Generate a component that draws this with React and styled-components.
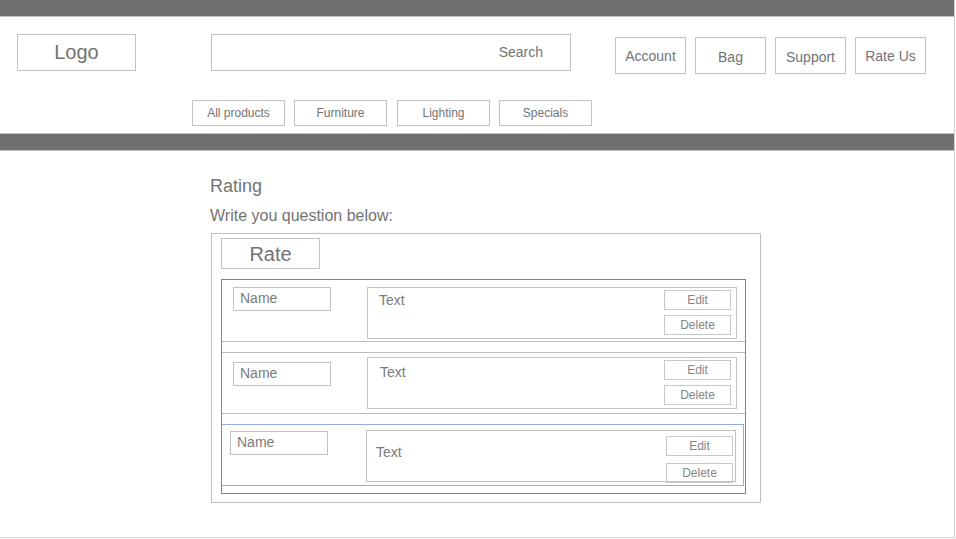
import React from "react";
import styled, { createGlobalStyle } from "styled-components";

const GlobalStyle = createGlobalStyle`
  body {
    margin: 0;
    background: #ffffff;
    font-family: "Liberation Sans", Arial, sans-serif;
  }
`;

const ratings = [
  { id: 1, top: 7, textTop: 8, textPad: 11, labelTop: 2, nameLeft: 11, textLeft: 36, padRight: 5, actionsTop: 0, blue: false },
  { id: 2, top: 9, textTop: 5, textPad: 12, labelTop: 4, nameLeft: 11, textLeft: 36, padRight: 5, actionsTop: 0, blue: false },
  { id: 3, top: 6, textTop: 6, textPad: 9, labelTop: 11, nameLeft: 8, textLeft: 38, padRight: 2, actionsTop: 3, blue: true },
];

const App = () => {
  return (
    <>
      <GlobalStyle />
      <Frame>
        <Bar $height={16} />
        <Header>
          <HeaderRow>
            <LogoBox>Logo</LogoBox>
            <SearchBox>Search</SearchBox>
            <TopNav>
              <TopButton>Account</TopButton>
              <TopButton $dy={2}>Bag</TopButton>
              <TopButton $dy={2}>Support</TopButton>
              <TopButton>Rate Us</TopButton>
            </TopNav>
          </HeaderRow>
          <CategoryRow>
            <CategoryButton>All products</CategoryButton>
            <CategoryButton>Furniture</CategoryButton>
            <CategoryButton $extra={1}>Lighting</CategoryButton>
            <CategoryButton>Specials</CategoryButton>
          </CategoryRow>
        </Header>
        <Bar $height={16} $topLine />
        <Content>
          <Title>Rating</Title>
          <Subtitle>Write you question below:</Subtitle>
          <Panel>
            <RateButton>Rate</RateButton>
            <ListBox>
              {ratings.map((r) => (
                <Row key={r.id} $blue={r.blue}>
                  <NameBox $top={r.top} $left={r.nameLeft}>Name</NameBox>
                  <TextBox $top={r.textTop} $left={r.textLeft} $padRight={r.padRight}>
                    <TextLabel $pad={r.textPad} $top={r.labelTop}>Text</TextLabel>
                    <Actions $top={r.actionsTop} $gap={r.blue ? 7 : 5}>
                      <SmallButton>Edit</SmallButton>
                      <SmallButton>Delete</SmallButton>
                    </Actions>
                  </TextBox>
                </Row>
              ))}
            </ListBox>
          </Panel>
        </Content>
      </Frame>
    </>
  );
};

export default App;

const Frame = styled.div`
  width: 955px;
  height: 538px;
  box-sizing: border-box;
  border-right: 1px solid #d2d2d2;
  border-bottom: 1px solid #d2d2d2;
  overflow: hidden;
`;

const Bar = styled.div`
  height: ${(p) => p.$height}px;
  background: #707070;
  border-bottom: 1px solid #c4c4c4;
  border-top: ${(p) => (p.$topLine ? "1px solid #c4c4c4" : "none")};
`;

const Header = styled.div`
  height: 116px;
  box-sizing: border-box;
  padding-top: 17px;
`;

const HeaderRow = styled.div`
  display: flex;
  align-items: flex-start;
`;

const Box = styled.div`
  box-sizing: border-box;
  border: 1px solid #c2c2c2;
  color: #737373;
  display: flex;
  align-items: center;
  justify-content: center;
`;

const LogoBox = styled(Box)`
  margin-left: 17px;
  width: 119px;
  height: 37px;
  font-size: 20px;
`;

const SearchBox = styled(Box)`
  margin-left: 75px;
  width: 360px;
  height: 37px;
  font-size: 14px;
  justify-content: flex-end;
  padding: 0 27px 2px 0;
`;

const TopNav = styled.div`
  display: flex;
  gap: 9px;
  margin-left: 44px;
  margin-top: 3px;
`;

const TopButton = styled(Box)`
  width: 71px;
  height: 37px;
  font-size: 14px;
  padding-top: ${(p) => p.$dy || 0}px;
`;

const CategoryRow = styled.div`
  display: flex;
  gap: 9px;
  margin-left: 192px;
  margin-top: 26px;
`;

const CategoryButton = styled(Box)`
  width: 93px;
  height: 26px;
  font-size: 12px;
  margin-left: ${(p) => p.$extra || 0}px;
`;

const Content = styled.div`
  padding: 24px 0 0 210px;
  color: #737373;
`;

const Title = styled.div`
  font-size: 18px;
  line-height: 22px;
`;

const Subtitle = styled.div`
  margin-top: 10px;
  font-size: 16px;
  line-height: 18px;
`;

const Panel = styled.div`
  margin-top: 8px;
  margin-left: 1px;
  width: 550px;
  height: 270px;
  box-sizing: border-box;
  border: 1px solid #bfbfbf;
  padding: 4px 0 0 9px;
`;

const RateButton = styled(Box)`
  width: 99px;
  height: 31px;
  font-size: 20px;
  padding-top: 2px;
`;

const ListBox = styled.div`
  margin-top: 10px;
  width: 525px;
  height: 215px;
  box-sizing: border-box;
  border: 1px solid #22c43c;
  display: flex;
  flex-direction: column;
  gap: 10px;
`;

const Row = styled.div`
  display: flex;
  align-items: flex-start;
  height: 62px;
  box-sizing: border-box;
  border-top: 1px solid ${(p) => (p.$blue ? "#8fb0db" : "#bdbdbd")};
  border-bottom: 1px solid ${(p) => (p.$blue ? "#8fb0db" : "#bdbdbd")};
  border-right: ${(p) => (p.$blue ? "1px solid #8fb0db" : "none")};
  margin-right: ${(p) => (p.$blue ? 1 : 0)}px;

  &:first-child {
    border-top: none;
  }
`;

const NameBox = styled(Box)`
  margin-top: ${(p) => p.$top}px;
  margin-left: ${(p) => p.$left}px;
  width: 98px;
  height: 24px;
  font-size: 14px;
  justify-content: flex-start;
  padding: 0 0 2px 6px;
  color: #7a7a7a;
`;

const TextBox = styled(Box)`
  margin-top: ${(p) => p.$top - 1}px;
  margin-left: ${(p) => p.$left}px;
  width: 370px;
  height: 52px;
  align-items: flex-start;
  justify-content: space-between;
  padding: 2px ${(p) => p.$padRight}px 2px 0;
  color: #7a7a7a;
`;

const TextLabel = styled.div`
  font-size: 14px;
  padding-left: ${(p) => p.$pad}px;
  padding-top: ${(p) => p.$top}px;
`;

const Actions = styled.div`
  display: flex;
  flex-direction: column;
  gap: ${(p) => p.$gap}px;
  padding-top: ${(p) => p.$top}px;
`;

const SmallButton = styled(Box)`
  width: 67px;
  height: 20px;
  font-size: 12px;
  color: #858585;
  border-color: #c8c8c8;
`;
